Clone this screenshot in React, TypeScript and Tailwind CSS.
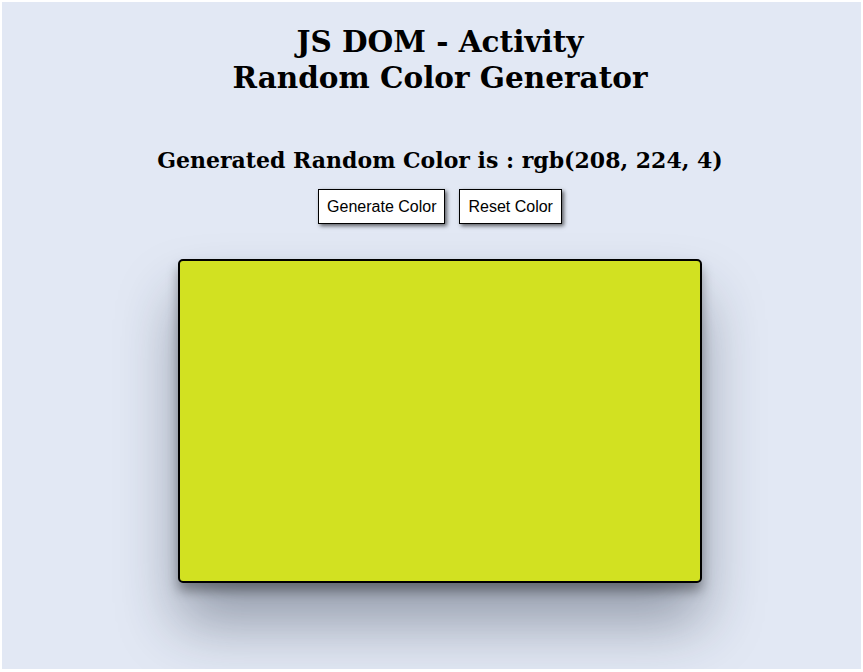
import React from 'react';

const randomColor = () => {
    const r = Math.floor(Math.random() * 256);
    const g = Math.floor(Math.random() * 256);
    const b = Math.floor(Math.random() * 256);
    return `rgb(${r}, ${g}, ${b})`;
};

const App: React.FC = () => {
    const [color, setColor] = React.useState('rgb(208, 224, 4)');

    return (
        <div className="h-[672px] w-[863px] bg-white pl-[2px] pt-[2px] pr-[2px] pb-[3px]">
            <div className="h-full bg-[#e2e8f4] pl-[17px] flex flex-col items-center font-['DejaVu_Serif',serif] text-black overflow-hidden">
                {/* Title */}
                <h1 className="mt-[22px] text-center text-[29.5px] leading-[36px] font-bold">
                    JS DOM - Activity
                    <br />
                    Random Color Generator
                </h1>

                <h2 className="mt-[50px] text-[22px] leading-[29px] font-bold">
                    Generated Random Color is : {color}
                </h2>

                {/* Buttons */}
                <div className="mt-[14px] flex gap-[14px] font-['Liberation_Sans',Arial,sans-serif] text-[16px]">
                    <button
                        onClick={() => setColor(randomColor())}
                        className="h-[35px] px-[8px] bg-white border border-black shadow-[2px_2px_4px_rgba(0,0,0,0.6)]"
                    >
                        Generate Color
                    </button>
                    <button
                        onClick={() => setColor('rgb(208, 224, 4)')}
                        className="h-[35px] px-[8px] bg-white border border-black shadow-[2px_2px_4px_rgba(0,0,0,0.6)]"
                    >
                        Reset Color
                    </button>
                </div>

                {/* Color box */}
                <div
                    className="mt-[35px] w-[524px] h-[324px] border-2 border-black rounded-[5px] shadow-[0_8px_12px_rgba(0,0,0,0.35),0_40px_60px_rgba(30,40,60,0.4)]"
                    style={{ backgroundColor: `color-mix(in srgb, ${color} 88%, #e2e8f4)` }}
                />
            </div>
        </div>
    );
};

export default App;
